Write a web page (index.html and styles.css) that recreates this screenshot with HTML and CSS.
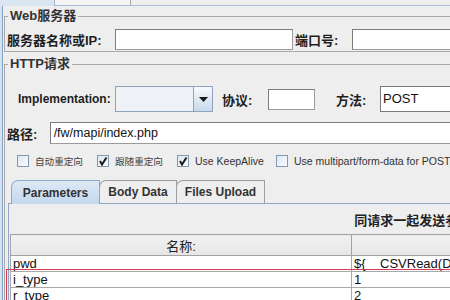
FILE: index.html
```html
<!DOCTYPE html>
<html>
<head>
<meta charset="utf-8">
<link rel="stylesheet" href="styles.css">
</head>
<body>
<div class="frame">
  <div class="frame-inner">
    <div class="toptabs"><span class="tt tt-sel"></span><span class="tt tt-mid"></span><span class="tt tt-rest"></span></div>

    <fieldset class="group group-web">
      <legend>Web服务器</legend>
      <div class="row row-web">
        <span class="lbl lbl-server">服务器名称或IP:</span>
        <span class="field field-server"></span>
        <span class="lbl lbl-port">端口号:</span>
        <span class="field field-port"></span>
      </div>
    </fieldset>

    <fieldset class="group group-http">
      <legend>HTTP请求</legend>
      <div class="row row-impl">
        <span class="lbl lbl-impl">Implementation:</span>
        <span class="combo">
          <span class="combo-box"></span>
          <span class="combo-btn"><svg width="9" height="5" viewBox="0 0 9 5"><path d="M0 0 H9 L4.5 5 Z" fill="#1a1a1a"/></svg></span>
        </span>
        <span class="lbl lbl-proto">协议:</span>
        <span class="field field-proto"></span>
        <span class="lbl lbl-method">方法:</span>
        <span class="field field-method">POST</span>
      </div>

      <div class="row row-path">
        <span class="lbl lbl-path">路径:</span>
        <span class="field field-path">/fw/mapi/index.php</span>
      </div>

      <div class="checks">
        <span class="check check-1"><span class="box"></span><span class="ctext cjk">自动重定向</span></span>
        <span class="check check-2"><span class="box"><svg width="10" height="10" viewBox="0 0 10 10"><path d="M2 5 L4 8.5 L8.5 1.5" fill="none" stroke="#1b1b1b" stroke-width="2"/></svg></span><span class="ctext cjk">跟随重定向</span></span>
        <span class="check check-3"><span class="box"><svg width="10" height="10" viewBox="0 0 10 10"><path d="M2 5 L4 8.5 L8.5 1.5" fill="none" stroke="#1b1b1b" stroke-width="2"/></svg></span><span class="ctext">Use KeepAlive</span></span>
        <span class="check check-4"><span class="box"></span><span class="ctext">Use multipart/form-data for POST</span></span>
      </div>

      <div class="tabs">
        <span class="tab tab-sel tab-params">Parameters</span>
        <span class="tab tab-body">Body Data</span>
        <span class="tab tab-files">Files Upload</span>
      </div>

      <div class="tabpanel">
        <div class="caption">同请求一起发送参数:</div>
        <table class="params">
          <colgroup><col class="c-name"><col class="c-val"></colgroup>
          <thead>
            <tr><th>名称:</th><th>值</th></tr>
          </thead>
          <tbody>
            <tr><td>pwd</td><td>${&nbsp;&nbsp;&nbsp;&nbsp;CSVRead(D:\</td></tr>
            <tr><td>i_type</td><td>1</td></tr>
            <tr><td>r_type</td><td>2</td></tr>
          </tbody>
        </table>
      </div>
    </fieldset>
  </div>
</div>
<div class="highlight"></div>
</body>
</html>
```

FILE: styles.css
```css
* { box-sizing: border-box; }
html, body { margin: 0; padding: 0; }
body {
  width: 450px;
  height: 300px;
  overflow: hidden;
  position: relative;
  background: #eeeeee;
  color: #222;
  font-family: "Liberation Sans", "Noto Sans CJK SC", sans-serif;
}
.frame {
  width: 900px;
  height: 300px;
  border-left: 2px solid #d6e2ef;
}
.frame-inner {
  height: 100%;
  border-left: 1px solid #86a3c6;
}

/* remnant of outer tab strip */
.toptabs {
  display: flex;
  height: 6px;
  margin-left: -3px;
}
.tt { display: block; height: 6px; }
.tt-sel { width: 55px; background: #dae5f2; border-right: 1px solid #9fb3cb; }
.tt-mid { width: 76px; background: #f4f4f4; border-right: 1px solid #a6a6a6; border-bottom: 1px solid #a9bfd8; }
.tt-rest { flex: 1; background: #eeeeee; border-bottom: 1px solid #a9bfd8; }

/* group boxes */
.group {
  width: 800px;
  margin: 0 0 0 1px;
  border: 1px solid #a9a9a9;
  min-width: 0;
}
.group legend {
  margin-left: 1px;
  padding: 0 2px;
  font-size: 13px;
  font-weight: bold;
  line-height: 14px;
  color: #333;
}
.group-web {
  margin-top: 3px;
  padding: 6px 0 1px 2px;
}
.group-http {
  margin-top: 5px;
  padding: 15px 0 0 2px;
  height: 300px;
}

.row { display: flex; align-items: center; }
.lbl {
  font-size: 13px;
  font-weight: bold;
  color: #1e1e1e;
  white-space: nowrap;
}
.field {
  display: block;
  background: #fff;
  border: 1px solid #9a9a9a;
  border-top-color: #7d7d7d;
  border-left-color: #7d7d7d;
  font-size: 12.5px;
  color: #111;
  white-space: nowrap;
  overflow: hidden;
}

.row-web { height: 21px; }
.lbl-server { width: 108px; }
.field-server { width: 178px; height: 21px; }
.lbl-port { width: 59px; padding-left: 2px; }
.field-port { width: 200px; height: 21px; }

.row-impl { height: 26px; padding-left: 11px; }
.lbl-impl { width: 97px; font-size: 12px; }
.combo { display: flex; width: 98px; height: 26px; }
.combo-box {
  width: 79px;
  background: #eef1f5;
  border: 1px solid #8ea3bd;
}
.combo-btn {
  width: 19px;
  display: flex;
  align-items: center;
  justify-content: center;
  background: linear-gradient(#f7f9fc, #c9d9eb);
  border: 1px solid #8ea3bd;
  border-left: none;
}
.lbl-proto { width: 55px; padding-left: 9px; }
.field-proto { width: 47px; height: 21px; }
.lbl-method { width: 65px; padding-left: 21px; }
.field-method {
  width: 200px;
  height: 26px;
  padding: 3px 0 0 2px;
  font-size: 13px;
  line-height: 18px;
  border-color: #7a7a7a;
}

.row-path { height: 22px; margin-top: 10px; }
.lbl-path { width: 43px; }
.field-path {
  width: 760px;
  height: 22px;
  padding: 2px 0 0 3px;
  line-height: 16px;
}

.checks {
  display: flex;
  align-items: center;
  height: 12px;
  margin-top: 11px;
  padding-left: 10px;
}
.check { display: flex; align-items: center; }
.check-1, .check-2 { width: 80px; }
.check-3 { width: 99px; }
.box {
  width: 12px;
  height: 12px;
  display: flex;
  align-items: center;
  justify-content: center;
  border: 1px solid #8197b3;
  background: linear-gradient(135deg, #dfe7f0, #fbfcfd);
}
.ctext {
  margin-left: 6px;
  font-size: 10.5px;
  color: #333;
  white-space: nowrap;
}
.ctext.cjk { font-size: 9.6px; color: #444; }

.tabs {
  display: flex;
  margin-top: 13px;
  padding-left: 4px;
  height: 23px;
}
.tab {
  display: flex;
  align-items: center;
  justify-content: center;
  height: 23px;
  font-size: 12px;
  font-weight: bold;
  color: #333;
  background: #eeeeee;
  border: 1px solid #9d9d9d;
  border-bottom: none;
  border-top-left-radius: 7px;
}
.tab + .tab { margin-left: -1px; }
.tab-params { width: 89px; }
.tab-body { width: 78px; }
.tab-files { width: 89px; }
.tab-sel {
  background: linear-gradient(#dde8f5, #c4d8ee);
  border-color: #8da8c8;
  height: 24px;
  margin-bottom: -1px;
  position: relative;
  z-index: 1;
}

.tabpanel {
  margin-left: 1px;
  border-top: 1px solid #8da8c8;
  border-left: 1px solid #8da8c8;
  padding-left: 1px;
  width: 830px;
  height: 120px;
}
.caption {
  width: 810px;
  height: 30px;
  display: flex;
  align-items: center;
  justify-content: center;
  font-size: 13px;
  font-weight: bold;
  color: #222;
}
.params {
  width: 810px;
  border-collapse: collapse;
  table-layout: fixed;
}
.c-name { width: 341px; }
.c-val { width: 469px; }
.params th {
  height: 21px;
  padding: 0;
  font-size: 13px;
  font-weight: normal;
  color: #222;
  background: linear-gradient(#f1f1f1, #e6e6e6);
  border: 1px solid #a2a2a2;
}
.params td {
  height: 16px;
  padding: 0 0 0 2px;
  font-size: 13px;
  line-height: 14px;
  color: #111;
  background: #fff;
  border: 1px solid #a8a8a8;
  white-space: nowrap;
  overflow: hidden;
}

.highlight {
  position: absolute;
  left: 6px;
  top: 269px;
  width: 600px;
  height: 100px;
  border: 1px solid #d43c55;
}
```
